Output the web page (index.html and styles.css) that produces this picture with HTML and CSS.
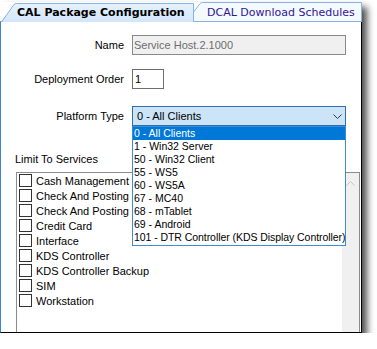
FILE: index.html
```html
<!DOCTYPE html>
<html>
<head>
<meta charset="utf-8">
<link rel="stylesheet" href="styles.css">
</head>
<body>
<div class="window">
  <div class="tabs">
    <div class="tab tab-active">
      <svg class="tab-bg" width="194" height="20" viewBox="0 0 194 20">
        <defs>
          <linearGradient id="ga" x1="0" y1="0" x2="0" y2="1">
            <stop offset="0" stop-color="#e6f1fc"/>
            <stop offset="1" stop-color="#d3e6f9"/>
          </linearGradient>
        </defs>
        <path d="M1.5,20 L14,2.5 Q15,1.5 16.5,1.5 L193.5,1.5 L193.5,20 Z" fill="url(#ga)"/>
        <path d="M1.5,20 L14,2.5 Q15,1.5 16.5,1.5 L193.5,1.5 L193.5,20" fill="none" stroke="#86b3e3" stroke-width="1"/>
      </svg>
      <span>CAL Package Configuration</span>
    </div>
    <div class="tab tab-other">
      <svg class="tab-bg" width="176" height="20" viewBox="0 0 176 20">
        <path d="M0.5,19.5 L14,1.5 Q15,0.5 16.5,0.5 L175.5,0.5 L175.5,19.5 Z" fill="#f4f9fe" stroke="#86b3e3" stroke-width="1"/>
      </svg>
      <span>DCAL Download Schedules</span>
    </div>
  </div>
  <div class="panel">
    <div class="row row-name">
      <span class="lbl">Name</span>
      <div class="textbox tb-name">Service Host.2.1000</div>
    </div>
    <div class="row row-order">
      <span class="lbl">Deployment Order</span>
      <div class="textbox tb-order">1</div>
    </div>
    <div class="row row-platform">
      <span class="lbl">Platform Type</span>
      <div class="combo">
        <span>0 - All Clients</span>
        <svg class="chev" width="9" height="5" viewBox="0 0 9 5"><path d="M0.5,0.5 L4.5,4.5 L8.5,0.5" fill="none" stroke="#3a3a3a" stroke-width="1"/></svg>
        <ul class="dropdown">
          <li class="sel">0 - All Clients</li>
          <li>1 - Win32 Server</li>
          <li>50 - Win32 Client</li>
          <li>55 - WS5</li>
          <li>60 - WS5A</li>
          <li>67 - MC40</li>
          <li>68 - mTablet</li>
          <li>69 - Android</li>
          <li class="long">101 - DTR Controller (KDS Display Controller)</li>
        </ul>
      </div>
    </div>
    <div class="section-label">Limit To Services</div>
    <div class="listbox">
      <div class="items">
        <div class="item"><span class="check"></span><span>Cash Management</span></div>
        <div class="item"><span class="check"></span><span>Check And Posting</span></div>
        <div class="item"><span class="check"></span><span>Check And Posting</span></div>
        <div class="item"><span class="check"></span><span>Credit Card</span></div>
        <div class="item"><span class="check"></span><span>Interface</span></div>
        <div class="item"><span class="check"></span><span>KDS Controller</span></div>
        <div class="item"><span class="check"></span><span>KDS Controller Backup</span></div>
        <div class="item"><span class="check"></span><span>SIM</span></div>
        <div class="item"><span class="check"></span><span>Workstation</span></div>
      </div>
      <div class="scrollbar">
        <svg class="up" width="9" height="5" viewBox="0 0 9 5"><path d="M0.5,4.5 L4.5,0.5 L8.5,4.5" fill="none" stroke="#c4c4c4" stroke-width="1"/></svg>
      </div>
    </div>
  </div>
</div>
</body>
</html>
```
FILE: styles.css
```css
html, body {
  margin: 0;
  background: #fff;
}
body {
  padding-top: 2px;
  font-family: "Liberation Sans", Arial, sans-serif;
  font-size: 11px;
  color: #000;
}
.window {
  width: 362px;
  box-shadow: 5px 5px 7px rgba(0, 0, 0, 0.7);
  background: #fff;
}
.tabs {
  display: flex;
  height: 20px;
  position: relative;
  z-index: 2;
  margin-bottom: -1px;
}
.tab {
  position: relative;
  box-sizing: border-box;
  height: 20px;
  display: flex;
  align-items: center;
  padding-top: 1px;
  font-family: "DejaVu Sans", Verdana, sans-serif;
  font-size: 11px;
  white-space: nowrap;
}
.tab-bg {
  position: absolute;
  left: 0;
  top: 0;
  z-index: -1;
}
.tab-active {
  width: 194px;
  padding-left: 17px;
  font-weight: bold;
  color: #000;
  z-index: 2;
}
.tab-other {
  width: 176px;
  margin-left: -8px;
  padding-left: 21px;
  color: #2e1696;
  z-index: 1;
}
.panel {
  box-sizing: border-box;
  height: 312px;
  border-top: 1px solid #86b3e3;
  border-left: 1px solid #3a85cf;
  border-right: 1px solid #000;
  border-bottom: 1px solid #000;
  background: #fff;
  overflow: hidden;
}
.row {
  display: flex;
  align-items: center;
  height: 20px;
}
.row-name { margin-top: 13px; }
.row-order { margin-top: 14px; }
.row-platform { margin-top: 17px; }
.lbl {
  width: 123px;
  margin-right: 8px;
  text-align: right;
}
.textbox {
  box-sizing: border-box;
  height: 20px;
  border: 1px solid #7a7a7a;
  padding-left: 1px;
  line-height: 18px;
  font-size: 11px;
}
.tb-name {
  width: 214px;
  background: #f0f0f0;
  color: #6d6d6d;
  border-color: #8a8a8a;
}
.tb-order {
  width: 32px;
  padding-left: 2px;
  background: #fff;
  border-color: #6e6e6e;
}
.combo {
  position: relative;
  box-sizing: border-box;
  width: 214px;
  height: 20px;
  border: 1px solid #2f6fae;
  background: #cce4f7;
  display: flex;
  align-items: center;
  justify-content: space-between;
  padding: 0 3px 0 4px;
}
.chev {
  display: block;
}
.dropdown {
  position: absolute;
  left: -1px;
  top: calc(100% + 1px);
  box-sizing: border-box;
  width: 214px;
  margin: 0;
  padding: 0 0 1px 0;
  list-style: none;
  border: 1px solid #3d8cda;
  background: #fff;
  z-index: 5;
}
.dropdown li {
  height: 13px;
  line-height: 13px;
  padding-left: 1px;
  font-size: 10.5px;
  white-space: nowrap;
  overflow: hidden;
}
.dropdown li.long {
  letter-spacing: -0.06px;
}
.dropdown li.sel {
  background: #0078d7;
  color: #fff;
}
.section-label {
  margin: 27px 0 0 14px;
  line-height: 13px;
}
.listbox {
  box-sizing: border-box;
  margin: 6px 0 0 15px;
  width: 344px;
  height: 160px;
  border: 1px solid #8c8c8c;
  border-bottom: none;
  display: flex;
  background: #fff;
}
.items {
  flex: 1;
}
.item {
  display: flex;
  align-items: center;
  gap: 4px;
  height: 15px;
  padding-left: 2px;
}
.check {
  box-sizing: border-box;
  width: 13px;
  height: 13px;
  border: 1px solid #333;
  background: #fff;
}
.scrollbar {
  width: 17px;
  background: #f0f0f0;
  display: flex;
  justify-content: center;
  padding-top: 8px;
  box-sizing: border-box;
}
.up {
  display: block;
}
```
